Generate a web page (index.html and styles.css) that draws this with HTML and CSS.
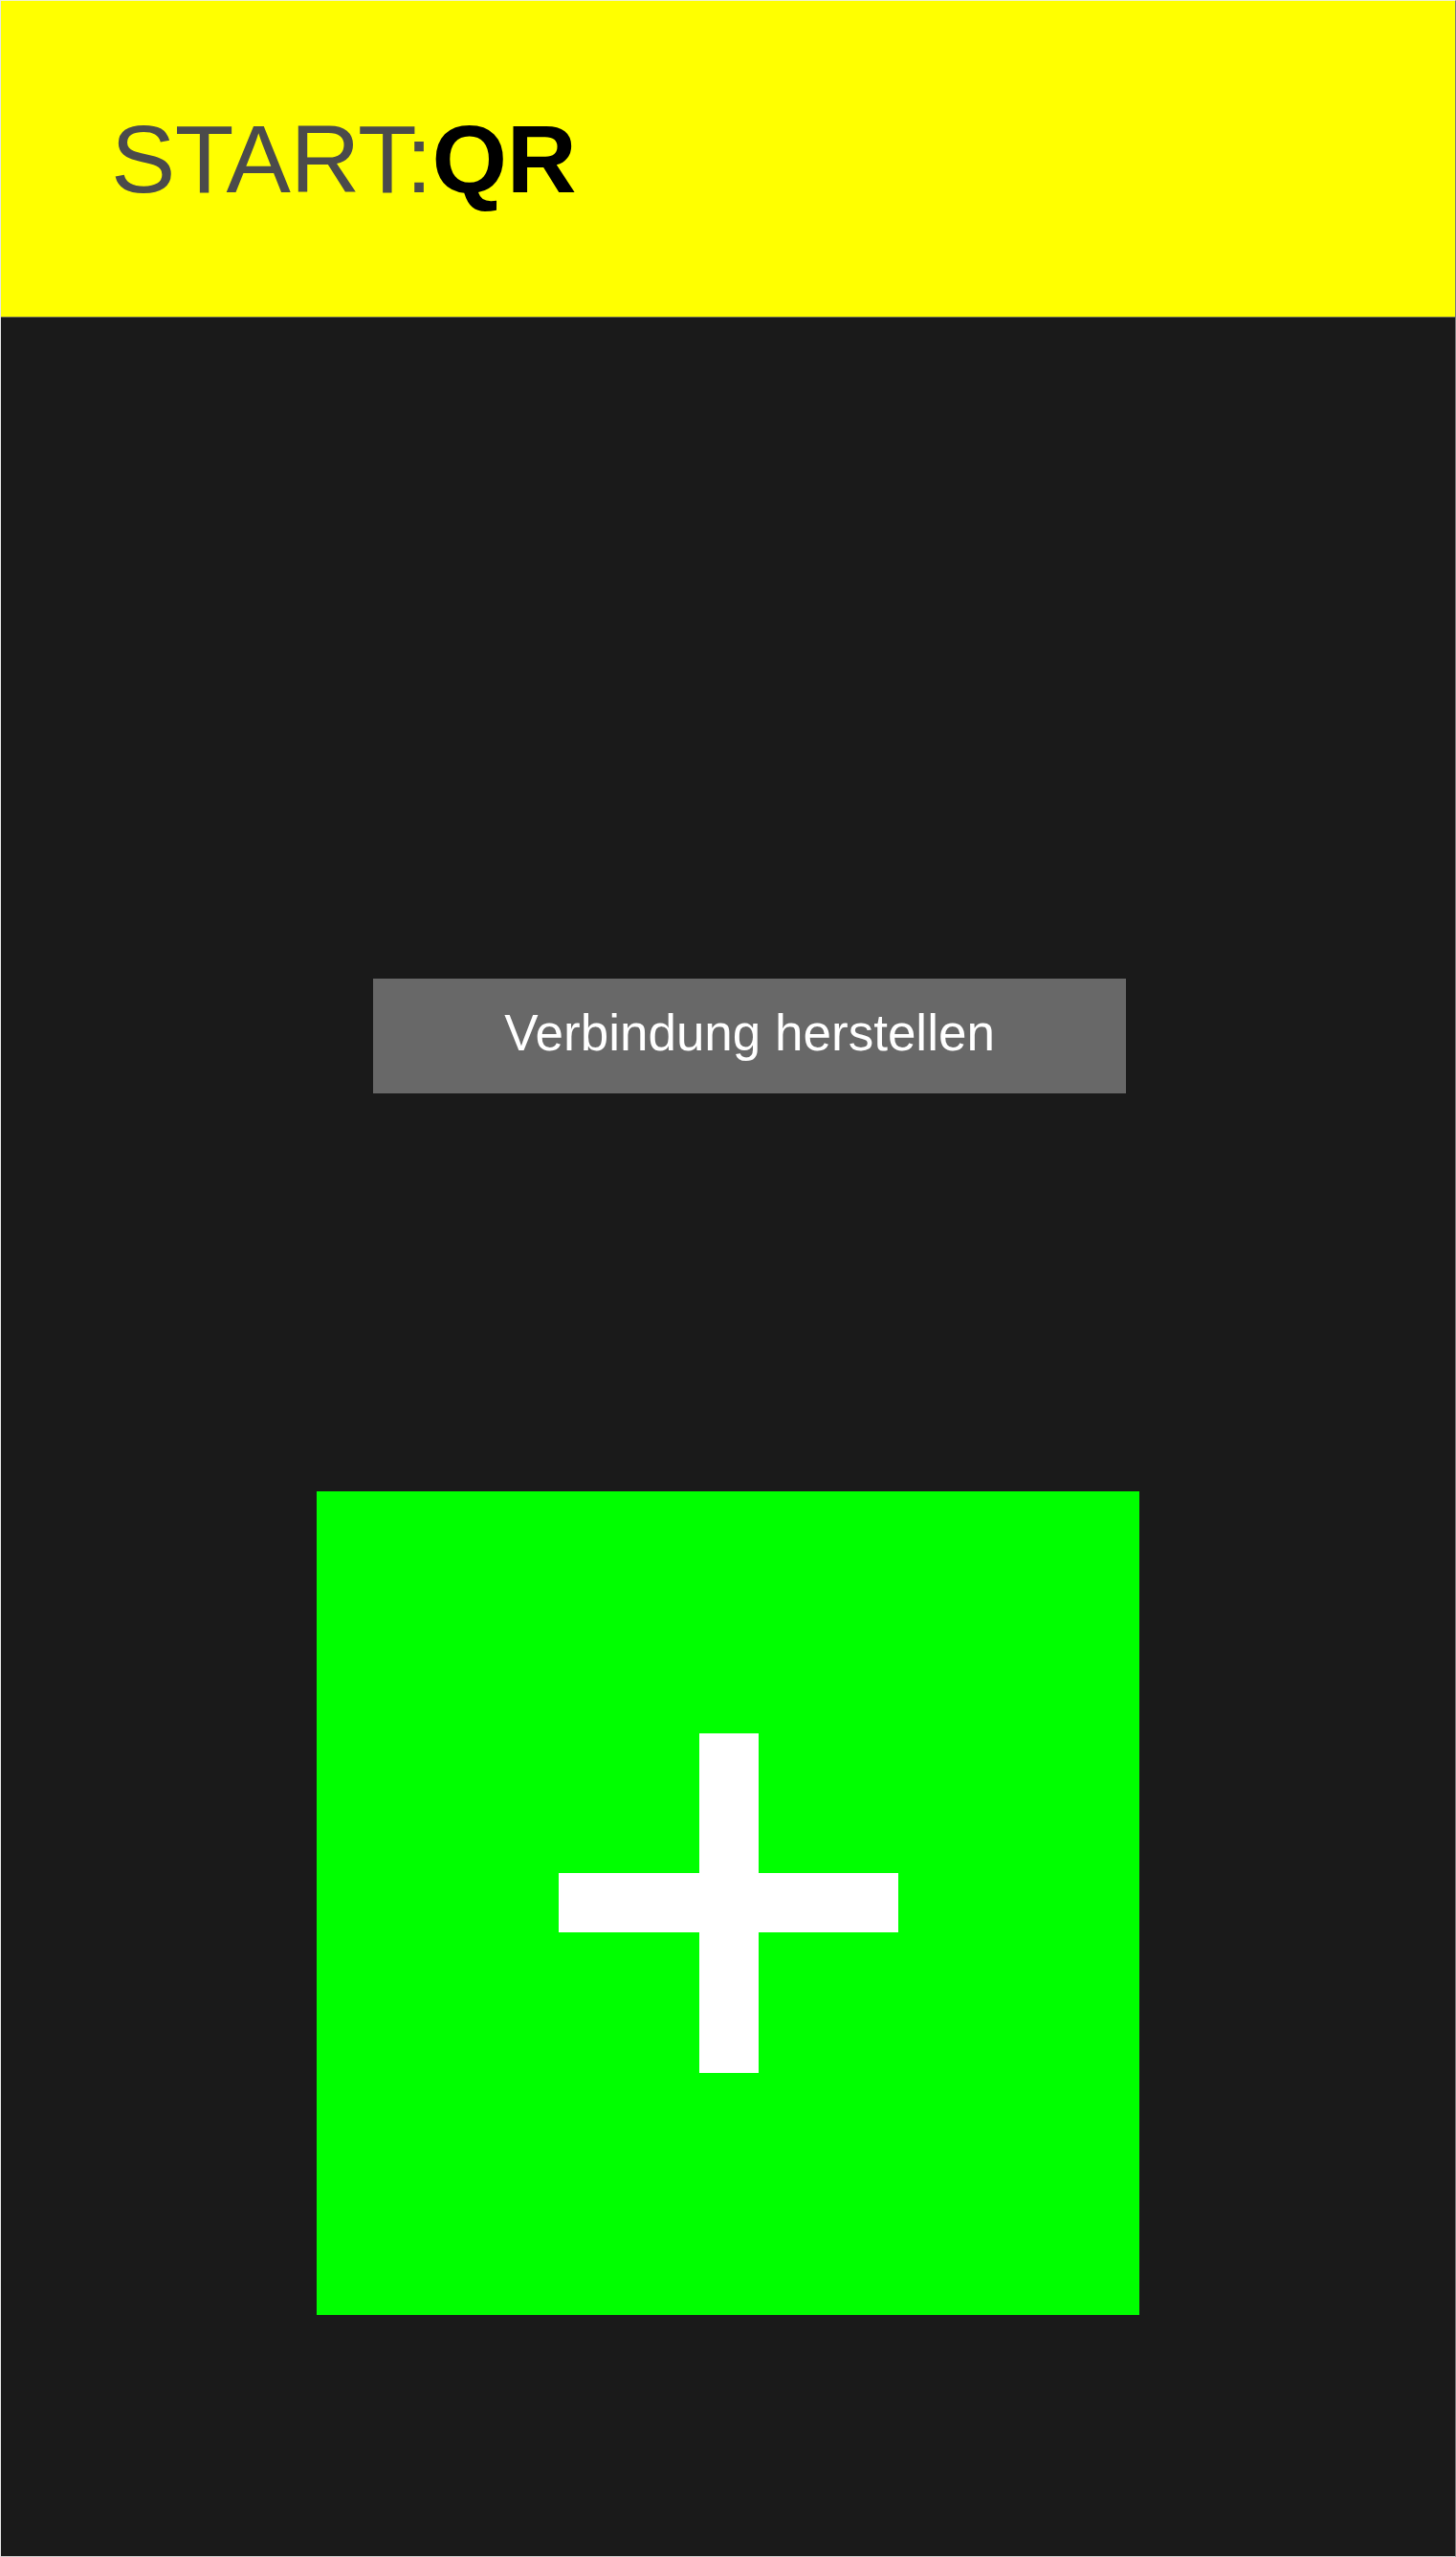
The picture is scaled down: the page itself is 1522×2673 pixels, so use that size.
FILE: index.html
```html
<!DOCTYPE html>
<html lang="de">
<head>
<meta charset="utf-8">
<title>START:QR</title>
<link rel="stylesheet" href="styles.css">
</head>
<body>
<div class="app">
  <header class="header">
    <h1 class="title"><span class="title-light">START:</span><span class="title-bold">QR</span></h1>
  </header>
  <main class="main">
    <button class="connect-btn" type="button">Verbindung herstellen</button>
    <button class="add-tile" type="button" aria-label="Hinzufügen">
      <svg class="plus" width="355" height="355" viewBox="0 0 355 355" aria-hidden="true">
        <rect x="147" y="0" width="62" height="355" fill="#ffffff"/>
        <rect x="0" y="146" width="355" height="62" fill="#ffffff"/>
      </svg>
    </button>
  </main>
</div>
</body>
</html>
```
FILE: styles.css
```css
html, body {
  margin: 0;
  padding: 0;
  background: #1a1a1a;
}

.app {
  box-sizing: border-box;
  width: 1522px;
  height: 2673px;
  display: flex;
  flex-direction: column;
  border-top: 1px solid #f2f2d0;
  border-left: 1px solid #e8e8e8;
  border-right: 1px solid #7c7c7c;
  border-bottom: 1px solid #cfcfcf;
  font-family: "Liberation Sans", Arial, sans-serif;
}

.header {
  box-sizing: border-box;
  height: 331px;
  flex: 0 0 auto;
  background: #ffff00;
  border-bottom: 1px solid #707050;
  display: flex;
  align-items: center;
  padding-left: 115px;
}

.title {
  margin: 0;
  font-size: 101px;
  line-height: 1;
  font-weight: normal;
  letter-spacing: -0.5px;
}

.title-light {
  color: #4b4b4b;
}

.title-bold {
  color: #000000;
  font-weight: bold;
}

.main {
  flex: 1 1 auto;
  background: #1a1a1a;
  display: flex;
  flex-direction: column;
  align-items: flex-start;
}

.connect-btn {
  box-sizing: border-box;
  margin: 691px 0 0 389px;
  width: 787px;
  height: 120px;
  padding: 0 0 8px 0;
  border: none;
  background: #686868;
  color: #ffffff;
  font-family: "Liberation Sans", Arial, sans-serif;
  font-size: 53px;
  line-height: 1;
  display: flex;
  align-items: center;
  justify-content: center;
}

.add-tile {
  box-sizing: border-box;
  align-self: center;
  margin-top: 416px;
  width: 860px;
  height: 861px;
  padding: 0;
  border: none;
  background: #00ff00;
  display: flex;
  align-items: center;
  justify-content: center;
}

.plus {
  display: block;
}
```
